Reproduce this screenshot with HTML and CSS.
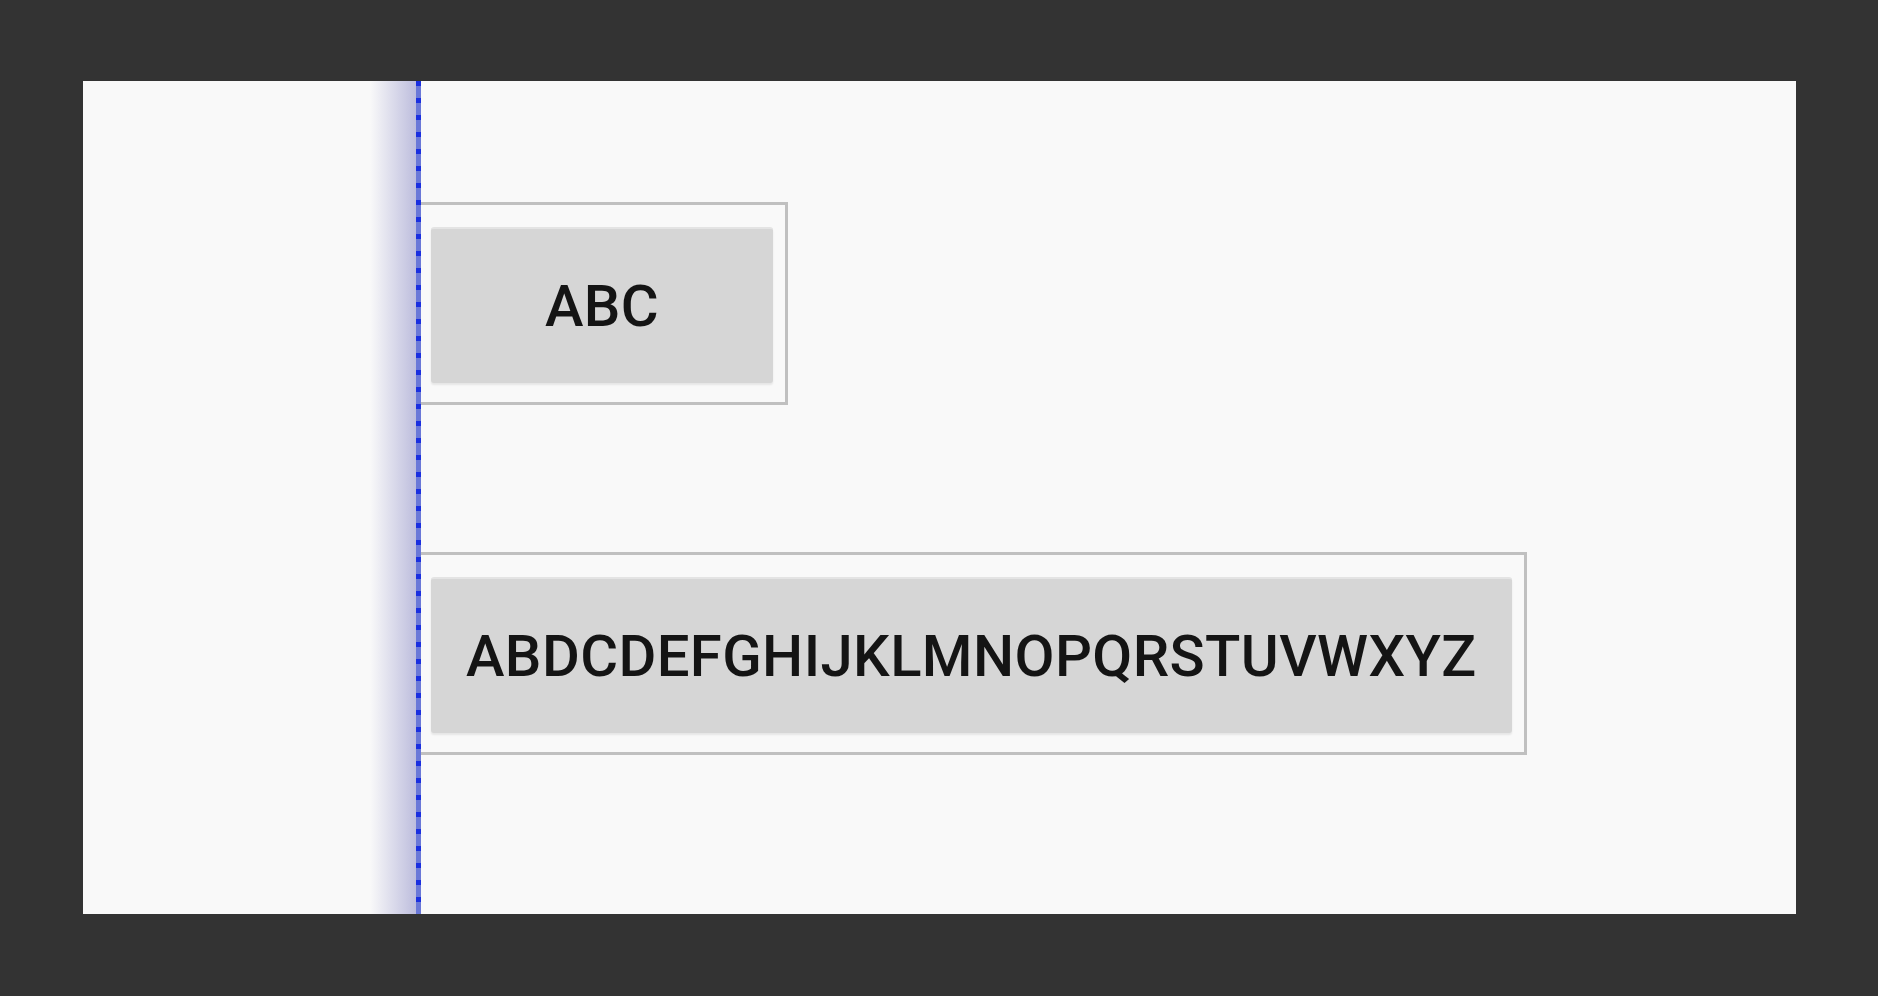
FILE: index.html
```html
<!DOCTYPE html>
<html lang="en">
<head>
    <meta charset="UTF-8">
    <meta name="viewport" content="width=device-width, initial-scale=1.0">
    <title>Button preview</title>
    <link rel="stylesheet" href="styles.css">
</head>
<body>
    <div class="preview">
        <!-- start guideline -->
        <div class="guide"></div>

        <div class="frame">
            <button class="btn">ABC</button>
        </div>

        <div class="frame">
            <button class="btn">ABDCDEFGHIJKLMNOPQRSTUVWXYZ</button>
        </div>
    </div>
</body>
</html>
```

FILE: styles.css
```css
body {
    margin: 0;
    padding: 81px 0 82px 83px;
    background-color: #333333;
    font-family: Roboto, "Noto Sans", sans-serif;
}
.preview {
    position: relative;
    width: 1713px;
    height: 833px;
    box-sizing: border-box;
    padding: 121px 0 0 335px;
    background-color: #f9f9f9;
    display: flex;
    flex-direction: column;
    align-items: flex-start;
    gap: 147px;
}
.guide {
    position: absolute;
    top: 0;
    bottom: 0;
    left: 287px;
    width: 51px;
    background:
        repeating-linear-gradient(to bottom, #1a2fe0 0, #1a2fe0 5px, #6a78d8 5px, #6a78d8 17px) right top / 5px 100% no-repeat,
        linear-gradient(to right, rgba(185, 185, 220, 0) 0, #bdbddd 100%) left top / 46px 100% no-repeat;
}
.frame {
    border: 3px solid #c0c0c0;
    padding: 22px 12px 19px 10px;
}
.btn {
    display: block;
    min-width: 342px;
    height: 156px;
    padding: 0 35px;
    border: none;
    border-top: 2px solid #e4e4e4;
    border-radius: 3px;
    background-color: #d6d6d6;
    box-shadow: 0 2px 2px rgba(0, 0, 0, 0.08);
    font-family: Roboto, "Noto Sans", sans-serif;
    font-size: 58px;
    font-weight: 500;
    letter-spacing: 0.4px;
    color: #141414;
}
```
